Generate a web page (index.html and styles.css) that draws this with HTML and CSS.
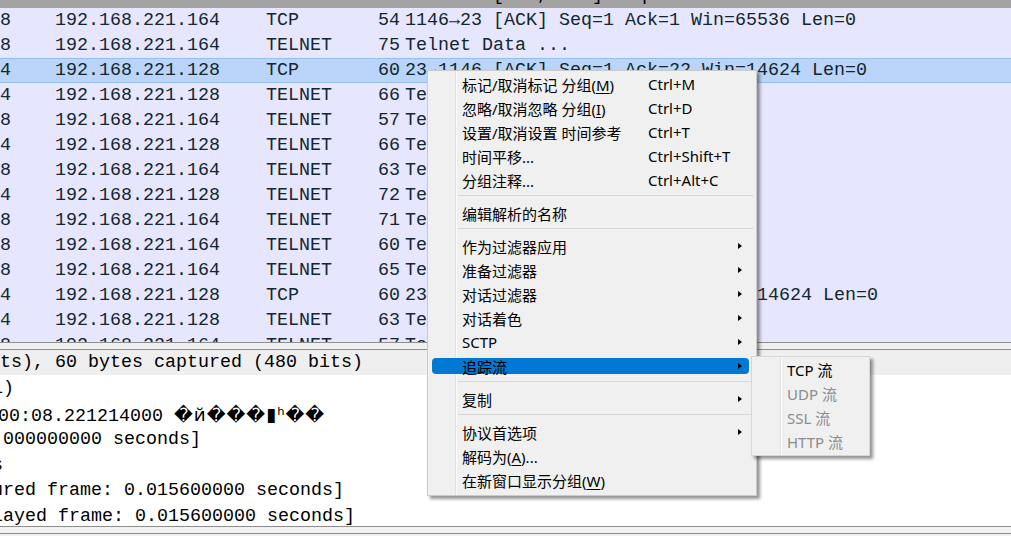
FILE: index.html
```html
<!DOCTYPE html>
<html>
<head>
<meta charset="utf-8">
<link rel="stylesheet" href="styles.css">
</head>
<body>
<div class="app">
  <div class="plist">
    <div class="rows">
      <div class="row gray"><span>4</span><span>192.168.221.128</span><span>TCP</span><span class="len">60</span><span>23→1146 [SYN, ACK] Seq=0 Ack=1 Win=14600 Len=0 MSS=1460</span></div>
      <div class="row"><span>8</span><span>192.168.221.164</span><span>TCP</span><span class="len">54</span><span>1146→23 [ACK] Seq=1 Ack=1 Win=65536 Len=0</span></div>
      <div class="row"><span>8</span><span>192.168.221.164</span><span>TELNET</span><span class="len">75</span><span>Telnet Data ...</span></div>
      <div class="row sel"><span>4</span><span>192.168.221.128</span><span>TCP</span><span class="len">60</span><span>23→1146 [ACK] Seq=1 Ack=22 Win=14624 Len=0</span></div>
      <div class="row"><span>4</span><span>192.168.221.128</span><span>TELNET</span><span class="len">66</span><span>Telnet Data ...</span></div>
      <div class="row"><span>8</span><span>192.168.221.164</span><span>TELNET</span><span class="len">57</span><span>Telnet Data ...</span></div>
      <div class="row"><span>4</span><span>192.168.221.128</span><span>TELNET</span><span class="len">66</span><span>Telnet Data ...</span></div>
      <div class="row"><span>8</span><span>192.168.221.164</span><span>TELNET</span><span class="len">63</span><span>Telnet Data ...</span></div>
      <div class="row"><span>4</span><span>192.168.221.128</span><span>TELNET</span><span class="len">72</span><span>Telnet Data ...</span></div>
      <div class="row"><span>8</span><span>192.168.221.164</span><span>TELNET</span><span class="len">71</span><span>Telnet Data ...</span></div>
      <div class="row"><span>8</span><span>192.168.221.164</span><span>TELNET</span><span class="len">60</span><span>Telnet Data ...</span></div>
      <div class="row"><span>8</span><span>192.168.221.164</span><span>TELNET</span><span class="len">65</span><span>Telnet Data ...</span></div>
      <div class="row"><span>4</span><span>192.168.221.128</span><span>TCP</span><span class="len">60</span><span>23→1146 [ACK] Seq=86 Ack=49 Win=14624 Len=0</span></div>
      <div class="row"><span>4</span><span>192.168.221.128</span><span>TELNET</span><span class="len">63</span><span>Telnet Data ...</span></div>
      <div class="row"><span>8</span><span>192.168.221.164</span><span>TELNET</span><span class="len">57</span><span>Telnet Data ...</span></div>
    </div>
  </div>
  <div class="splitter"></div>
  <div class="details">
    <div class="dl cur">ts), 60 bytes captured (480 bits)</div>
    <div class="dl cut8">1)</div>
    <div class="dl cut2">00:08.221214000 <span class="junk">�й���▮ʰ��</span></div>
    <div class="dl pad3">000000000 seconds]</div>
    <div class="dl cut8">s</div>
    <div class="dl cut8">ured frame: 0.015600000 seconds]</div>
    <div class="dl cut8">layed frame: 0.015600000 seconds]</div>
  </div>
  <div class="statusgap"></div>
  <div class="tail"></div>

  <div class="menu">
    <div class="mi"><span>标记/取消标记 分组(<u>M</u>)</span><span>Ctrl+M</span></div>
    <div class="mi"><span>忽略/取消忽略 分组(<u>I</u>)</span><span>Ctrl+D</span></div>
    <div class="mi"><span>设置/取消设置 时间参考</span><span>Ctrl+T</span></div>
    <div class="mi"><span>时间平移...</span><span>Ctrl+Shift+T</span></div>
    <div class="mi"><span>分组注释...</span><span>Ctrl+Alt+C</span></div>
    <div class="sep"></div>
    <div class="mi"><span>编辑解析的名称</span><span></span></div>
    <div class="sep"></div>
    <div class="mi"><span>作为过滤器应用</span><span></span><i class="arr"></i></div>
    <div class="mi"><span>准备过滤器</span><span></span><i class="arr"></i></div>
    <div class="mi"><span>对话过滤器</span><span></span><i class="arr"></i></div>
    <div class="mi"><span>对话着色</span><span></span><i class="arr"></i></div>
    <div class="mi"><span>SCTP</span><span></span><i class="arr"></i></div>
    <div class="mi hot"><span>追踪流</span><span></span><i class="arr"></i></div>
    <div class="sep"></div>
    <div class="mi"><span>复制</span><span></span><i class="arr"></i></div>
    <div class="sep"></div>
    <div class="mi"><span>协议首选项</span><span></span><i class="arr"></i></div>
    <div class="mi"><span>解码为(<u>A</u>)...</span><span></span></div>
    <div class="mi"><span>在新窗口显示分组(<u>W</u>)</span><span></span></div>
  </div>

  <div class="submenu">
    <div class="si">TCP 流</div>
    <div class="si off">UDP 流</div>
    <div class="si off">SSL 流</div>
    <div class="si off">HTTP 流</div>
  </div>
</div>
</body>
</html>
```

FILE: styles.css
```css
html, body {
  margin: 0;
  padding: 0;
  background: #f0f0f0;
  overflow: hidden;
}

.app {
  position: relative;
  width: 1011px;
  height: 536px;
  overflow: hidden;
  font-family: "Liberation Mono", "DejaVu Sans Mono", monospace;
  font-size: 18.33px;
  color: #12272e;
}

.plist {
  height: 342px;
  overflow: hidden;
  background: #e7e6ff;
  border-bottom: 1px solid #8e8e8e;
}

.rows {
  margin-top: -17px;
}

.row {
  display: grid;
  grid-template-columns: 55px 211px 104px 35px 1fr;
  height: 25px;
  line-height: 25px;
  white-space: nowrap;
  box-sizing: border-box;
}

.row .len {
  text-align: right;
  padding-right: 5px;
}

.row.gray {
  background: #a3a3a3;
  color: #000;
}

.row.sel {
  background: #bad5f9;
  border-top: 1px solid #93c0f1;
  border-bottom: 1px solid #93c0f1;
  line-height: 23px;
}

.splitter {
  height: 6px;
  background: #f0f0f0;
  border-bottom: 1px solid #8e8e8e;
}

.details {
  height: 176px;
  overflow: hidden;
  background: #fff;
  color: #000;
}

.dl {
  height: 25.6px;
  line-height: 27px;
  white-space: nowrap;
}

.dl.cur {
  background: #efefef;
  height: 25px;
  line-height: 26px;
}

.dl.cut8 { text-indent: -8px; }
.dl.cut2 { text-indent: -2px; }
.dl.pad3 { text-indent: 3px; }

.junk {
  font-family: "DejaVu Sans", sans-serif;
  letter-spacing: 1px;
}

.statusgap {
  border-top: 1px solid #8e8e8e;
  height: 6px;
  background: #f0f0f0;
}

.tail {
  border-top: 1px solid #8e8e8e;
  height: 3px;
  background: #f0f0f0;
}

/* context menu */
.menu {
  position: absolute;
  left: 427px;
  top: 70px;
  width: 330px;
  box-sizing: border-box;
  padding: 1px 0 3px;
  background-color: #f0f0f0;
  background-image: linear-gradient(to right, transparent 27px, #e2e2e2 27px, #e2e2e2 28px, #fbfbfb 28px, #fbfbfb 29px, transparent 29px);
  border: 1px solid #cacaca;
  box-shadow: 3px 3px 3px rgba(0, 0, 0, 0.42);
  font-family: "Noto Sans", "Noto Sans CJK SC", sans-serif;
  font-size: 15px;
  color: #000;
  z-index: 2;
}

.mi {
  position: relative;
  display: grid;
  grid-template-columns: 186px 1fr auto;
  align-items: center;
  height: 24px;
  padding-left: 34px;
  white-space: nowrap;
}

.mi > span {
  position: relative;
  z-index: 1;
}

.mi u {
  text-decoration: underline;
  text-underline-offset: 2px;
}

.mi.hot::before {
  content: "";
  position: absolute;
  left: 4px;
  right: 7px;
  top: 4px;
  height: 16px;
  background: #0078d4;
  border-radius: 4px;
}

.arr {
  position: relative;
  z-index: 1;
  width: 0;
  height: 0;
  border-left: 4px solid #000;
  border-top: 3.5px solid transparent;
  border-bottom: 3.5px solid transparent;
  margin-right: 14px;
}

.sep {
  height: 1px;
  background: #d7d7d7;
  margin: 3px 3px 5px 30px;
}

/* submenu */
.submenu {
  position: absolute;
  left: 751px;
  top: 356px;
  width: 119px;
  box-sizing: border-box;
  padding: 1px 0;
  background-color: #f0f0f0;
  background-image: linear-gradient(to right, transparent 28px, #e4e4e4 28px, #e4e4e4 29px, #fbfbfb 29px, #fbfbfb 30px, transparent 30px);
  border: 1px solid #d6d6d6;
  box-shadow: 3px 3px 3px rgba(0, 0, 0, 0.42);
  font-family: "Noto Sans", "Noto Sans CJK SC", sans-serif;
  font-size: 15px;
  color: #000;
  z-index: 3;
}

.si {
  height: 24px;
  line-height: 24px;
  padding-left: 35px;
  white-space: nowrap;
}

.si.off {
  color: #8b8d91;
}
```
